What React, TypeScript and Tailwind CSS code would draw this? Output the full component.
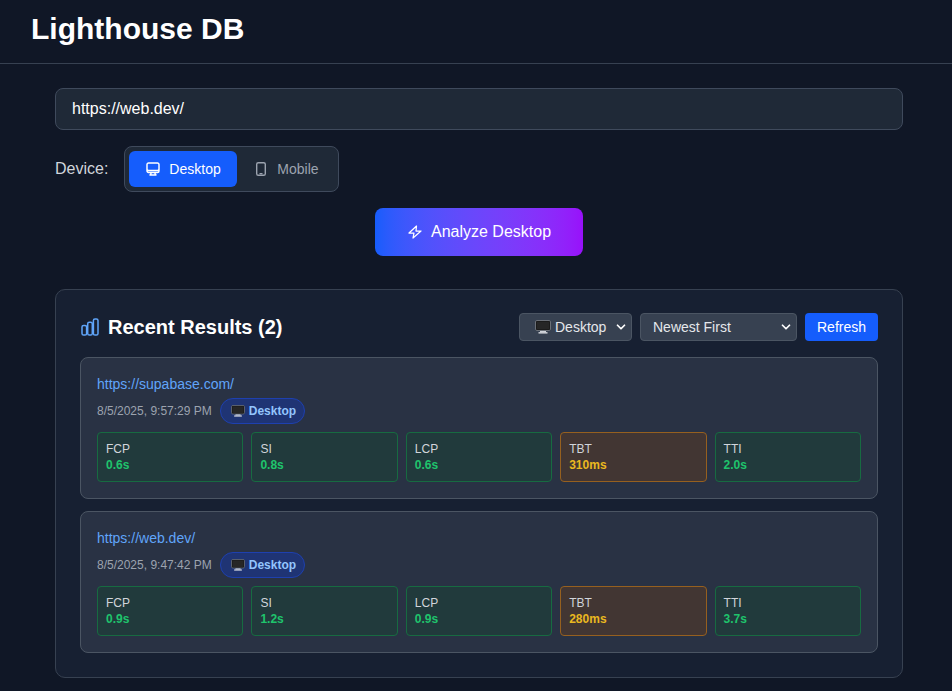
import { ChevronDown } from "lucide-react"
import { HiOutlineComputerDesktop } from "react-icons/hi2"

const DesktopGlyph = ({ className }: { className: string }) => (
  <svg viewBox="0 0 16 14" className={className}>
    <rect x="0.5" y="0.5" width="15" height="10" rx="1.5" fill="#111" stroke="#6b7078" />
    <rect x="1.5" y="1.5" width="13" height="8" fill="#262626" />
    <rect x="5" y="11" width="6" height="1.2" fill="#d1d5db" />
    <rect x="3.5" y="12.2" width="9" height="1.3" fill="#e5e7eb" />
  </svg>
)

const PhoneIcon = () => (
  <svg viewBox="0 0 16 16" className="size-4" fill="none" stroke="currentColor" strokeWidth="1.4">
    <rect x="3.7" y="1.7" width="8.6" height="12.6" rx="1.6" />
    <path d="M7 12.6h2" strokeLinecap="round" />
  </svg>
)

const BoltIcon = () => (
  <svg viewBox="0 0 16 16" className="size-4" fill="none" stroke="currentColor" strokeWidth="1.25" strokeLinejoin="round">
    <path d="M9.5 2 2 9h5l-1 5 8-7H9z" />
  </svg>
)

const BarsIcon = () => (
  <svg viewBox="0 0 20 20" className="size-5 text-[#60a5fa]" fill="none" stroke="currentColor" strokeWidth="1.5">
    <rect x="2" y="8.5" width="4.6" height="9.5" rx="1.6" />
    <rect x="7.7" y="5.2" width="4.6" height="12.8" rx="1.6" />
    <rect x="13.4" y="2" width="4.6" height="16" rx="1.6" />
  </svg>
)

const results = [
  {
    url: "https://supabase.com/",
    date: "8/5/2025, 9:57:29 PM",
    metrics: [
      { label: "FCP", value: "0.6s", warn: false },
      { label: "SI", value: "0.8s", warn: false },
      { label: "LCP", value: "0.6s", warn: false },
      { label: "TBT", value: "310ms", warn: true },
      { label: "TTI", value: "2.0s", warn: false },
    ],
  },
  {
    url: "https://web.dev/",
    date: "8/5/2025, 9:47:42 PM",
    metrics: [
      { label: "FCP", value: "0.9s", warn: false },
      { label: "SI", value: "1.2s", warn: false },
      { label: "LCP", value: "0.9s", warn: false },
      { label: "TBT", value: "280ms", warn: true },
      { label: "TTI", value: "3.7s", warn: false },
    ],
  },
]

const App = () => {
  return (
    <div className="min-h-screen bg-[#101726] font-['Liberation_Sans',Arial,sans-serif] text-white">
      <header className="h-16 border-b border-[#374151] pl-[31px] pt-[11px]">
        <h1 className="text-[30px] leading-9 font-bold">Lighthouse DB</h1>
      </header>

      <main className="ml-[55px] mr-[49px] pt-6">
        <div className="flex h-[42px] items-center rounded-lg border border-[#3f4a5c] bg-[#1f2937] px-4 text-base">
          https://web.dev/
        </div>

        <div className="mt-4 flex items-center gap-4">
          <span className="text-base text-[#d1d5db]">Device:</span>
          <div className="flex h-[46px] items-center rounded-lg border border-[#3f4a5c] bg-[#1f2937] p-1">
            <div className="flex h-9 w-[108px] items-center gap-2 rounded-md bg-[#155dfc] pl-4 text-sm">
              <HiOutlineComputerDesktop className="size-4" strokeWidth={2.2} />
              Desktop
            </div>
            <div className="flex h-9 w-[97px] items-center gap-2 pl-4 text-sm text-[#9ca3af]">
              <PhoneIcon />
              Mobile
            </div>
          </div>
        </div>

        <div className="mt-4 flex justify-center">
          <div className="flex h-12 w-52 items-center justify-center gap-2 rounded-lg bg-gradient-to-r from-[#155dfc] to-[#9810fa] text-base">
            <BoltIcon />
            Analyze Desktop
          </div>
        </div>

        <section className="mt-[33px] rounded-[10px] border border-[#374151] bg-[#172032] px-6 pt-[23px] pb-6">
          <div className="flex h-[28px] items-center justify-between">
            <div className="flex items-center gap-2">
              <BarsIcon />
              <h2 className="text-xl font-bold">Recent Results (2)</h2>
            </div>
            <div className="flex items-center gap-2 text-sm">
              <div className="flex h-7 w-[113px] items-center rounded border border-[#4b5563] bg-[#374151] pl-[15px] pr-[3px]">
                <DesktopGlyph className="mr-1 h-[14px] w-4" />
                <span className="text-[#e5e7eb]">Desktop</span>
                <ChevronDown className="ml-auto size-3.5" strokeWidth={3} />
              </div>
              <div className="flex h-7 w-[157px] items-center rounded border border-[#4b5563] bg-[#374151] pl-3 pr-[3px]">
                <span className="text-[#e5e7eb]">Newest First</span>
                <ChevronDown className="ml-auto size-3.5" strokeWidth={3} />
              </div>
              <div className="flex h-7 w-[73px] items-center justify-center rounded bg-[#155dfc]">Refresh</div>
            </div>
          </div>

          <div className="mt-4 flex flex-col gap-3">
            {results.map((result) => (
              <div key={result.url} className="rounded-lg border border-[#4b5563] bg-[#293244] p-4">
                <a className="block text-sm leading-5 text-[#60a5fa]">{result.url}</a>
                <div className="mt-1 flex items-center gap-2">
                  <span className="text-xs text-[#9ca3af]">{result.date}</span>
                  <span className="flex h-[26px] items-center gap-1 rounded-full border border-[#1e40af] bg-[#1f3474] pl-[10px] pr-2 text-xs font-bold text-[#93c5fd]">
                    <DesktopGlyph className="h-3 w-[14px]" />
                    Desktop
                  </span>
                </div>
                <div className="mt-[8px] grid grid-cols-5 gap-2">
                  {result.metrics.map((metric) => (
                    <div
                      key={metric.label}
                      className={`h-[50px] rounded border px-2 py-2 text-xs leading-4 ${
                        metric.warn ? "border-[#96601f] bg-[#423633]" : "border-[#176b41] bg-[#213a3c]"
                      }`}
                    >
                      <div className="text-[#d1d5db]">{metric.label}</div>
                      <div className={`font-bold ${metric.warn ? "text-[#eab820]" : "text-[#1fc46c]"}`}>
                        {metric.value}
                      </div>
                    </div>
                  ))}
                </div>
              </div>
            ))}
          </div>
        </section>
      </main>
    </div>
  )
}

export default App
